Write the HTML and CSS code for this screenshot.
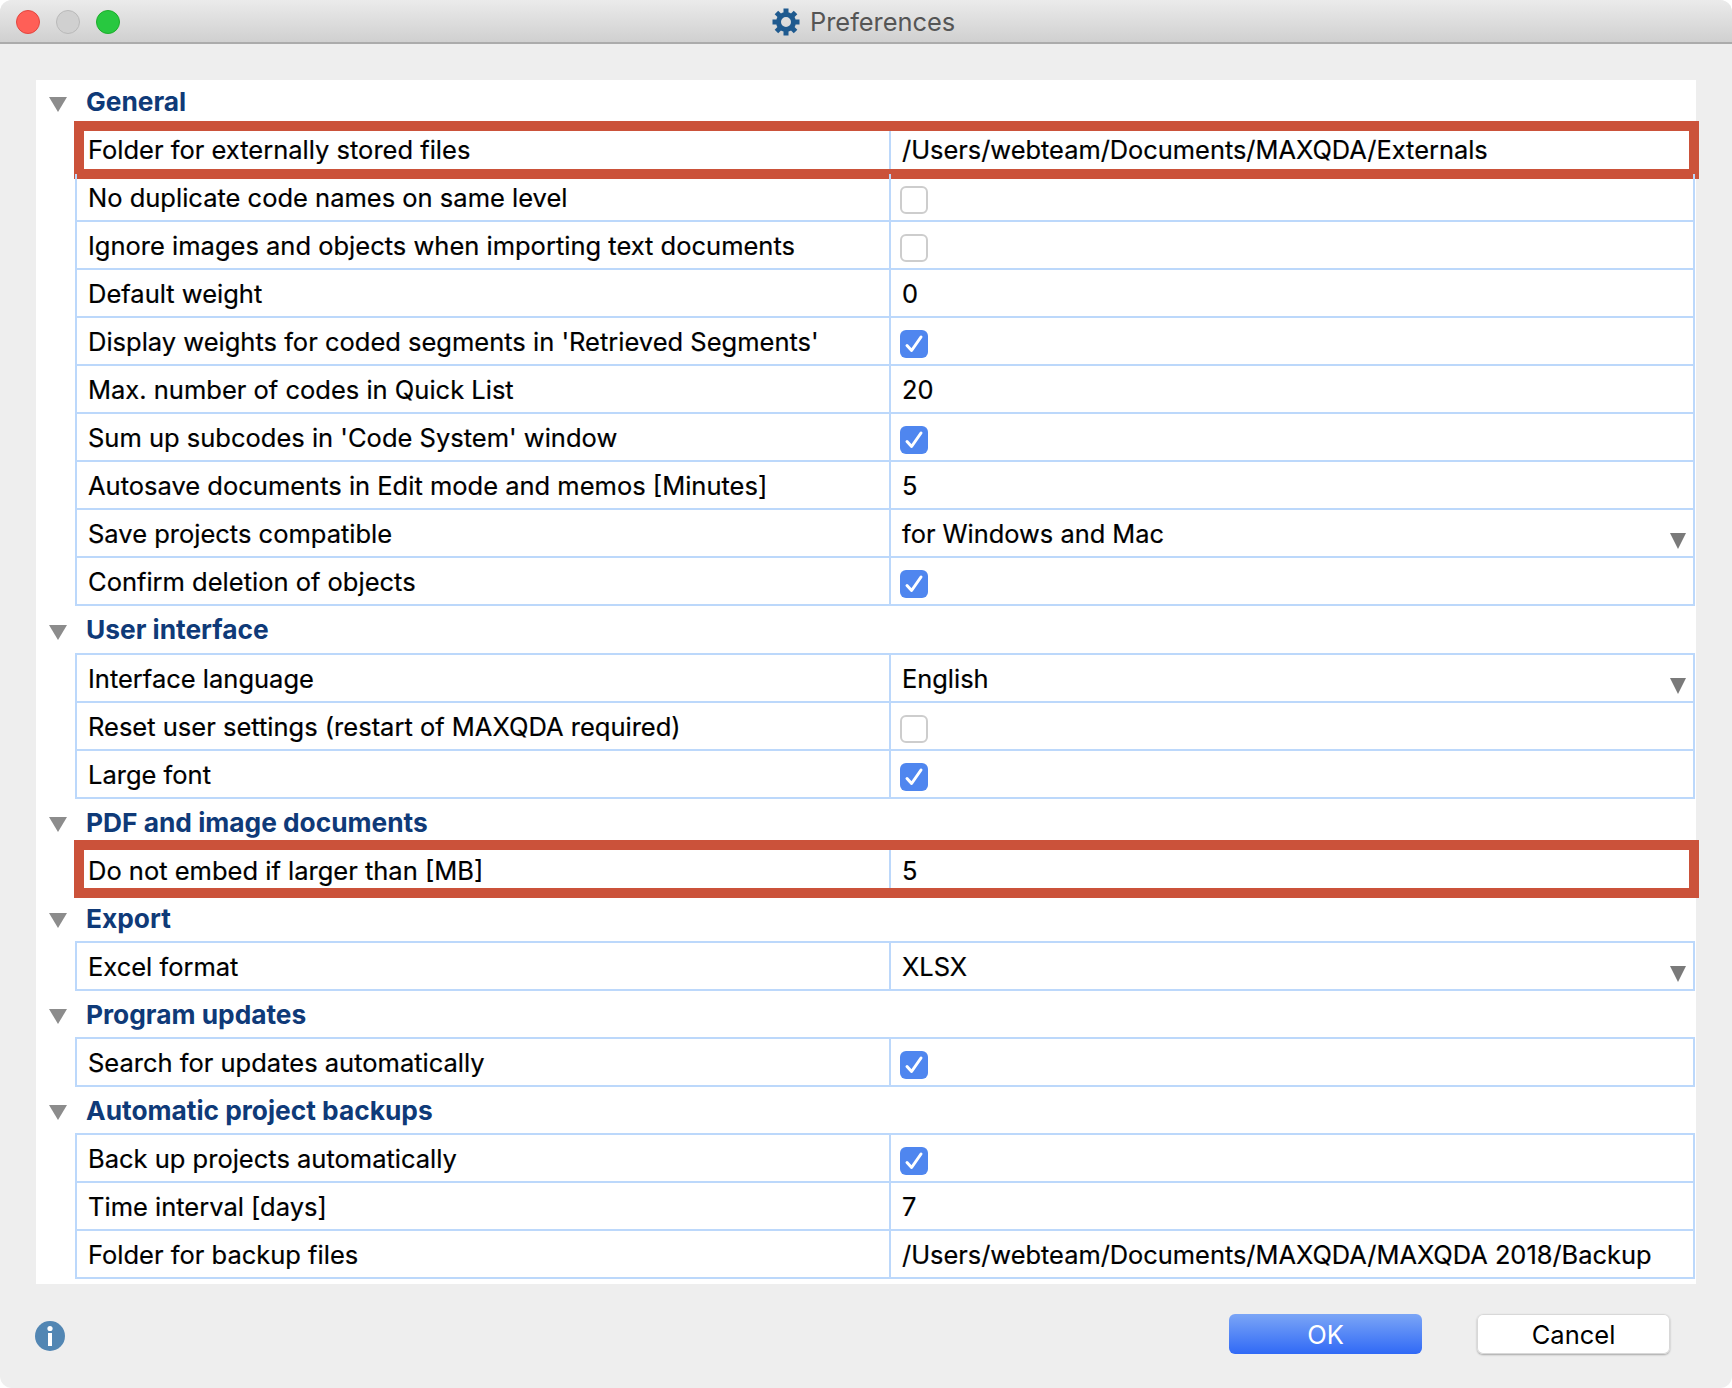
FILE: index.html
```html
<!DOCTYPE html>
<html lang="en">
<head>
    <meta charset="UTF-8">
    <meta name="viewport" content="width=device-width, initial-scale=1.0">
    <title>Preferences</title>
    <link rel="stylesheet" href="styles.css">
</head>
<body>
    <div class="window">
        <div class="titlebar">
            <div class="lights">
                <span class="light red"></span>
                <span class="light gray"></span>
                <span class="light green"></span>
            </div>
            <div class="title">
                <svg class="gear" viewBox="0 0 28 28" width="28" height="28">
                    <circle cx="14" cy="14" r="7.5" fill="none" stroke="#1f5a8f" stroke-width="5"/>
                    <g fill="#1f5a8f">
                        <rect x="11.5" y="0.5" width="5" height="6"/>
                        <rect x="11.5" y="0.5" width="5" height="6" transform="rotate(45 14 14)"/>
                        <rect x="11.5" y="0.5" width="5" height="6" transform="rotate(90 14 14)"/>
                        <rect x="11.5" y="0.5" width="5" height="6" transform="rotate(135 14 14)"/>
                        <rect x="11.5" y="0.5" width="5" height="6" transform="rotate(180 14 14)"/>
                        <rect x="11.5" y="0.5" width="5" height="6" transform="rotate(225 14 14)"/>
                        <rect x="11.5" y="0.5" width="5" height="6" transform="rotate(270 14 14)"/>
                        <rect x="11.5" y="0.5" width="5" height="6" transform="rotate(315 14 14)"/>
                    </g>
                </svg>
                <span class="title-text">Preferences</span>
            </div>
        </div>

        <div class="panel">
            <div class="section">
                <div class="heading"><span class="arrow"></span>General</div>
                <div class="rows">
                    <div class="row marked"><div class="label">Folder for externally stored files</div><div class="value">/Users/webteam/Documents/MAXQDA/Externals</div></div>
                    <div class="row"><div class="label">No duplicate code names on same level</div><div class="value"><span class="check"></span></div></div>
                    <div class="row"><div class="label">Ignore images and objects when importing text documents</div><div class="value"><span class="check"></span></div></div>
                    <div class="row"><div class="label">Default weight</div><div class="value">0</div></div>
                    <div class="row"><div class="label">Display weights for coded segments in 'Retrieved Segments'</div><div class="value"><span class="check on"><svg viewBox="0 0 28 28"><path d="M7 15.5l4.6 5L21 7"/></svg></span></div></div>
                    <div class="row"><div class="label">Max. number of codes in Quick List</div><div class="value">20</div></div>
                    <div class="row"><div class="label">Sum up subcodes in 'Code System' window</div><div class="value"><span class="check on"><svg viewBox="0 0 28 28"><path d="M7 15.5l4.6 5L21 7"/></svg></span></div></div>
                    <div class="row"><div class="label">Autosave documents in Edit mode and memos [Minutes]</div><div class="value">5</div></div>
                    <div class="row"><div class="label">Save projects compatible</div><div class="value select">for Windows and Mac</div></div>
                    <div class="row"><div class="label">Confirm deletion of objects</div><div class="value"><span class="check on"><svg viewBox="0 0 28 28"><path d="M7 15.5l4.6 5L21 7"/></svg></span></div></div>
                </div>
            </div>

            <div class="section">
                <div class="heading wide"><span class="arrow"></span>User interface</div>
                <div class="rows">
                    <div class="row"><div class="label">Interface language</div><div class="value select">English</div></div>
                    <div class="row"><div class="label">Reset user settings (restart of MAXQDA required)</div><div class="value"><span class="check"></span></div></div>
                    <div class="row"><div class="label">Large font</div><div class="value"><span class="check on"><svg viewBox="0 0 28 28"><path d="M7 15.5l4.6 5L21 7"/></svg></span></div></div>
                </div>
            </div>

            <div class="section">
                <div class="heading"><span class="arrow"></span>PDF and image documents</div>
                <div class="rows">
                    <div class="row marked raised"><div class="label">Do not embed if larger than [MB]</div><div class="value">5</div></div>
                </div>
            </div>

            <div class="section">
                <div class="heading"><span class="arrow"></span>Export</div>
                <div class="rows">
                    <div class="row"><div class="label">Excel format</div><div class="value select">XLSX</div></div>
                </div>
            </div>

            <div class="section">
                <div class="heading"><span class="arrow"></span>Program updates</div>
                <div class="rows">
                    <div class="row"><div class="label">Search for updates automatically</div><div class="value"><span class="check on"><svg viewBox="0 0 28 28"><path d="M7 15.5l4.6 5L21 7"/></svg></span></div></div>
                </div>
            </div>

            <div class="section">
                <div class="heading"><span class="arrow"></span>Automatic project backups</div>
                <div class="rows">
                    <div class="row"><div class="label">Back up projects automatically</div><div class="value"><span class="check on"><svg viewBox="0 0 28 28"><path d="M7 15.5l4.6 5L21 7"/></svg></span></div></div>
                    <div class="row"><div class="label">Time interval [days]</div><div class="value">7</div></div>
                    <div class="row"><div class="label">Folder for backup files</div><div class="value">/Users/webteam/Documents/MAXQDA/MAXQDA 2018/Backup</div></div>
                </div>
            </div>
        </div>

        <div class="footer">
            <svg class="info" viewBox="0 0 30 30" width="30" height="30">
                <circle cx="15" cy="15" r="15" fill="#5286b3"/>
                <circle cx="15" cy="7.5" r="2.6" fill="#fff"/>
                <rect x="13" y="12" width="4" height="13" fill="#fff"/>
            </svg>
            <div class="buttons">
                <button class="btn primary">OK</button>
                <button class="btn">Cancel</button>
            </div>
        </div>
    </div>
</body>
</html>
```

FILE: styles.css
```css
body {
    margin: 0;
    background-color: #fff;
    font-family: Inter, "Liberation Sans", sans-serif;
    color: #000;
}

.window {
    height: 1388px;
    box-sizing: border-box;
    background-color: #eee;
    border-radius: 12px;
    overflow: hidden;
    display: flex;
    flex-direction: column;
}

.titlebar {
    height: 44px;
    box-sizing: border-box;
    flex-shrink: 0;
    background: linear-gradient(#ebebeb, #d0d0d0);
    border-bottom: 2px solid #ababab;
    display: flex;
    align-items: center;
    position: relative;
}

.lights {
    display: flex;
    gap: 16px;
    padding-left: 16px;
    margin-top: 2px;
}

.light {
    width: 24px;
    height: 24px;
    box-sizing: border-box;
    border-radius: 50%;
    border: 1px solid;
}

.red {
    background-color: #ff5f57;
    border-color: #e2463f;
}

.gray {
    background-color: #d0d0d0;
    border-color: #b9b9b9;
}

.green {
    background-color: #28c840;
    border-color: #1dad2b;
}

.title {
    position: absolute;
    left: 772px;
    top: 8px;
    display: flex;
    align-items: center;
    gap: 10px;
    font-size: 25.4px;
    line-height: 28px;
    color: #555;
}

.title-text {
    margin-top: 0;
}

.panel {
    margin: 36px 36px 0;
    padding-bottom: 5px;
    background-color: #fff;
}

.heading {
    height: 46px;
    display: flex;
    align-items: center;
    font-size: 26.3px;
    font-weight: 700;
    color: #0f3a78;
    padding-left: 13px;
}

.section:first-child .heading {
    height: 42px;
    padding-bottom: 2px;
}

.section:first-child .arrow {
    margin-top: 7px;
}

.heading.wide {
    height: 47px;
}

.arrow {
    width: 0;
    height: 0;
    border-left: 9px solid transparent;
    border-right: 9px solid transparent;
    border-top: 15px solid #8c8c8c;
    margin-right: 19px;
    margin-top: 5px;
}

.rows {
    margin: 0 1px 0 39px;
    border-top: 2px solid #bcd8fb;
}

.row {
    height: 48px;
    box-sizing: border-box;
    display: grid;
    grid-template-columns: 814px 1fr;
    border-left: 2px solid #bcd8fb;
    border-right: 2px solid #bcd8fb;
    border-bottom: 2px solid #bcd8fb;
    font-size: 25.5px;
    position: relative;
    -webkit-text-stroke: 0.2px #000;
}

.label {
    padding-left: 11px;
    border-right: 2px solid #bcd8fb;
    line-height: 48px;
    white-space: nowrap;
}

.value {
    padding-left: 11px;
    font-size: 25.4px;
    line-height: 48px;
    white-space: nowrap;
    position: relative;
}

.select::after {
    content: "";
    position: absolute;
    right: 7px;
    top: 23px;
    border-left: 8px solid transparent;
    border-right: 8px solid transparent;
    border-top: 16px solid #7a7a7a;
}

.marked::after {
    content: "";
    position: absolute;
    left: -3px;
    right: -6px;
    top: -5px;
    bottom: -7px;
    border: 10px solid #cb523a;
    pointer-events: none;
}

.raised::after {
    top: -7px;
    bottom: -5px;
}

.check {
    display: block;
    width: 28px;
    height: 28px;
    box-sizing: border-box;
    margin: 12px 0 0 -2px;
    background-color: #fff;
    border: 2px solid #cdcdcd;
    border-radius: 6px;
}

.check.on {
    background-color: #4f86ef;
    border: none;
}

.check svg {
    display: block;
    width: 28px;
    height: 28px;
}

.check path {
    fill: none;
    stroke: #fff;
    stroke-width: 3;
    stroke-linecap: round;
    stroke-linejoin: round;
}

.footer {
    flex: 1;
    display: flex;
    align-items: flex-start;
    justify-content: space-between;
    padding: 30px 62px 0 35px;
}

.info {
    margin-top: 7px;
}

.buttons {
    display: flex;
    gap: 55px;
}

.btn {
    width: 193px;
    height: 40px;
    padding: 0;
    font-family: inherit;
    font-size: 25.5px;
    color: #000;
    background-color: #fff;
    border: none;
    border-radius: 6px;
    box-shadow: inset 0 0 0 1px #d8d8d8, 0 1px 2px rgba(0, 0, 0, 0.3);
}

.primary {
    color: #fff;
    background: linear-gradient(#7ba5f6, #3069f6);
    box-shadow: none;
}
```
